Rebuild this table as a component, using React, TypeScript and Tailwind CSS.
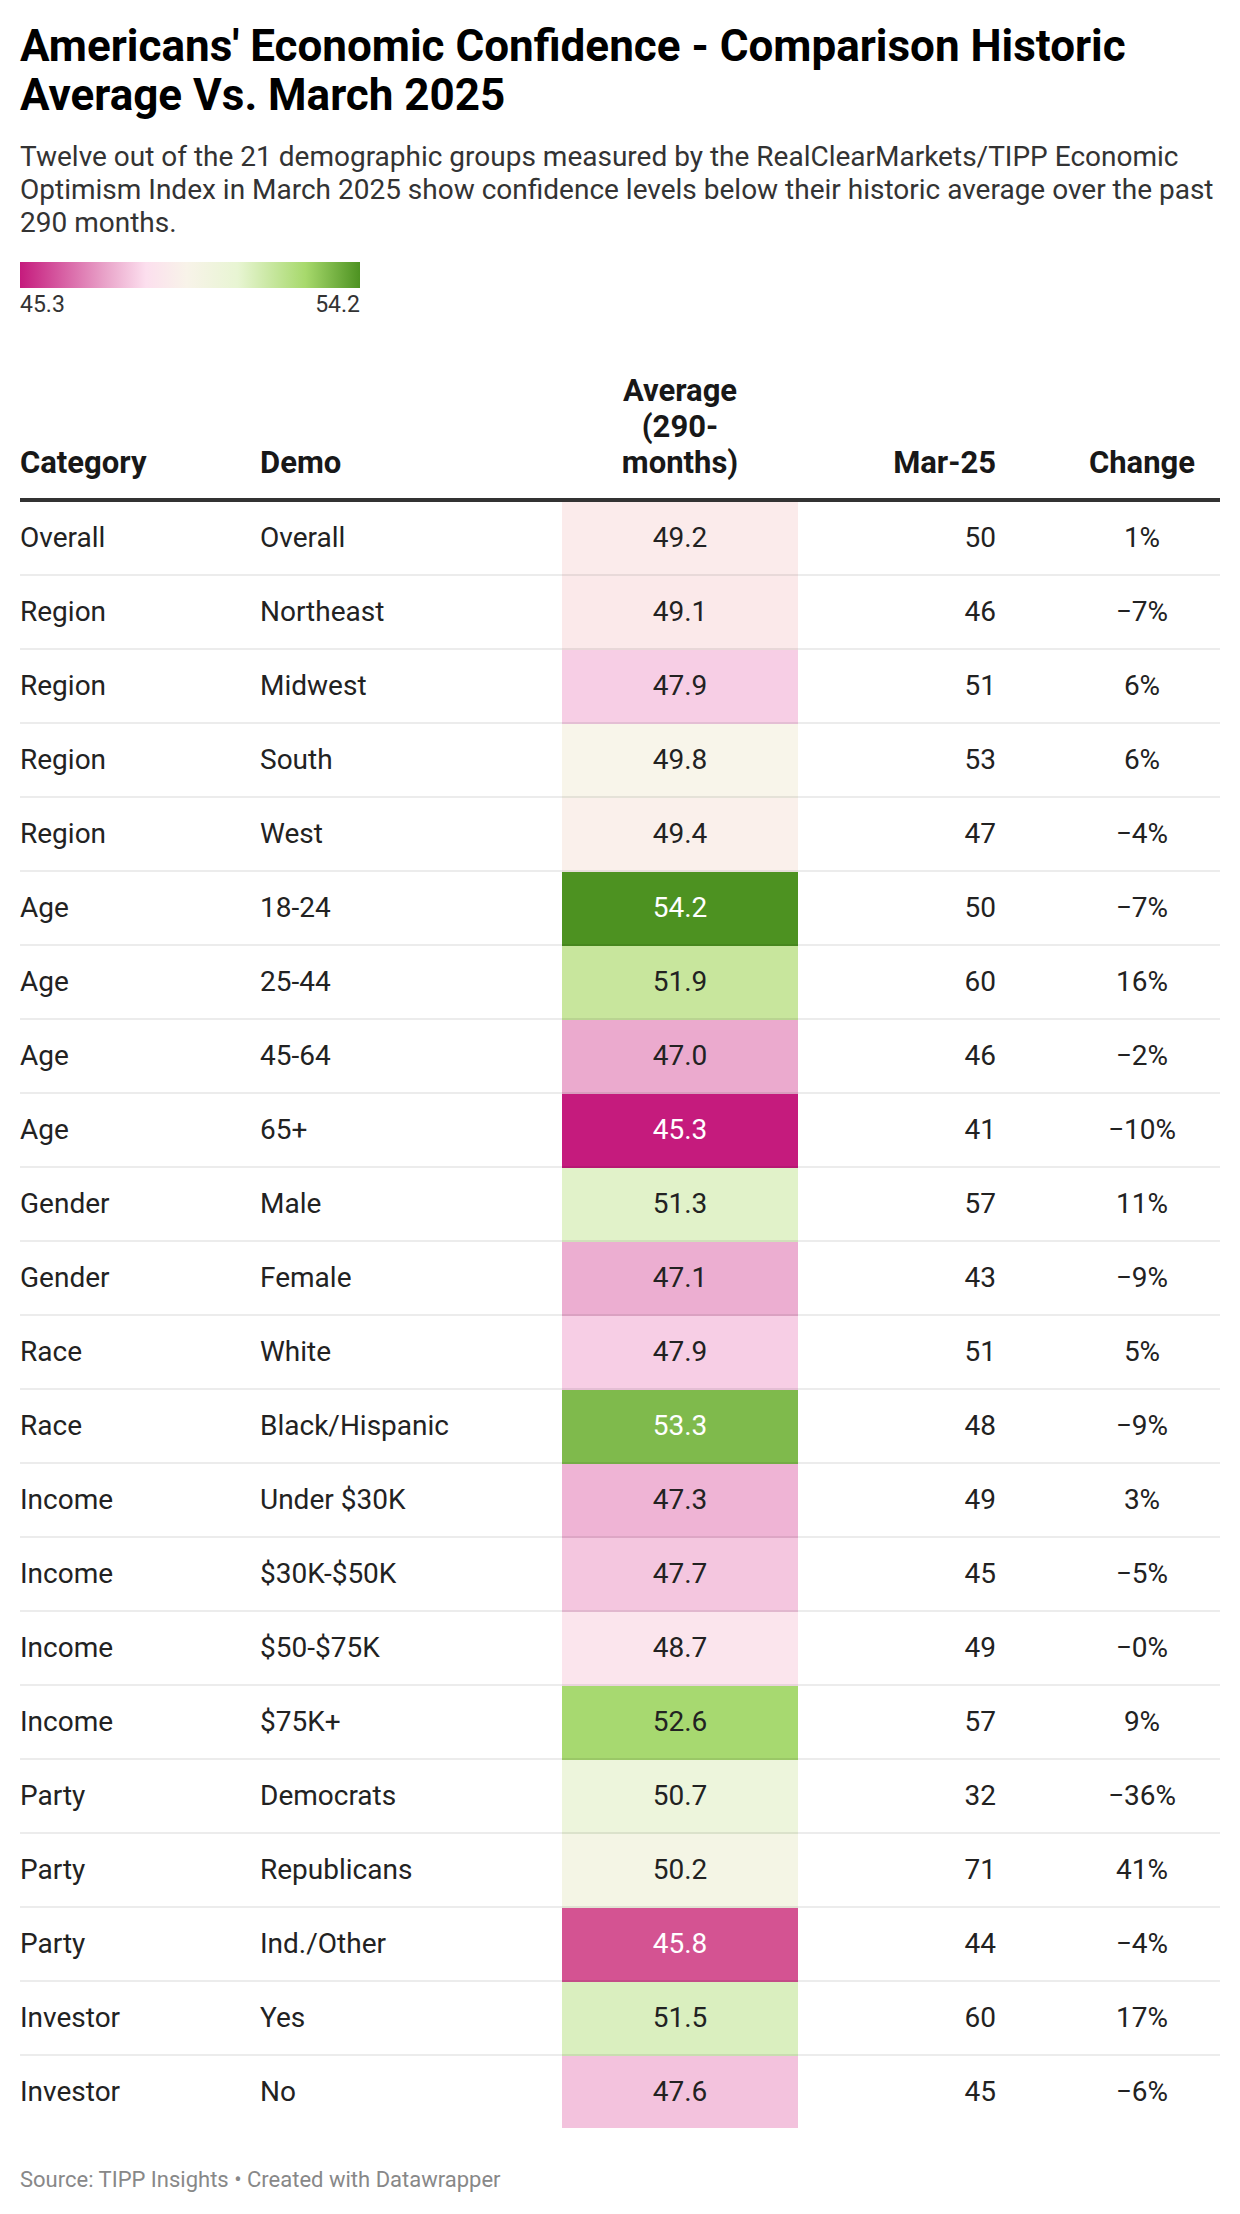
import React from 'react';

type Row = {
    category: string;
    demo: string;
    avg: string;
    bg: string;
    light?: boolean;
    mar: string;
    change: string;
};

// colours read off the PiYG-style scale (45.3 magenta -> 54.2 green)
const ROWS: Row[] = [
    { category: 'Overall', demo: 'Overall', avg: '49.2', bg: 'bg-[#fbebeb]', mar: '50', change: '1%' },
    { category: 'Region', demo: 'Northeast', avg: '49.1', bg: 'bg-[#fbe9ea]', mar: '46', change: '−7%' },
    { category: 'Region', demo: 'Midwest', avg: '47.9', bg: 'bg-[#f7cee5]', mar: '51', change: '6%' },
    { category: 'Region', demo: 'South', avg: '49.8', bg: 'bg-[#f8f5ea]', mar: '53', change: '6%' },
    { category: 'Region', demo: 'West', avg: '49.4', bg: 'bg-[#faf0eb]', mar: '47', change: '−4%' },
    { category: 'Age', demo: '18-24', avg: '54.2', bg: 'bg-[#4d9221]', light: true, mar: '50', change: '−7%' },
    { category: 'Age', demo: '25-44', avg: '51.9', bg: 'bg-[#c8e69d]', mar: '60', change: '16%' },
    { category: 'Age', demo: '45-64', avg: '47.0', bg: 'bg-[#ebaace]', mar: '46', change: '−2%' },
    { category: 'Age', demo: '65+', avg: '45.3', bg: 'bg-[#c51b7d]', light: true, mar: '41', change: '−10%' },
    { category: 'Gender', demo: 'Male', avg: '51.3', bg: 'bg-[#e1f2c9]', mar: '57', change: '11%' },
    { category: 'Gender', demo: 'Female', avg: '47.1', bg: 'bg-[#ecaed1]', mar: '43', change: '−9%' },
    { category: 'Race', demo: 'White', avg: '47.9', bg: 'bg-[#f7cee5]', mar: '51', change: '5%' },
    { category: 'Race', demo: 'Black/Hispanic', avg: '53.3', bg: 'bg-[#7fba4c]', light: true, mar: '48', change: '−9%' },
    { category: 'Income', demo: 'Under $30K', avg: '47.3', bg: 'bg-[#efb4d5]', mar: '49', change: '3%' },
    { category: 'Income', demo: '$30K-$50K', avg: '47.7', bg: 'bg-[#f4c6df]', mar: '45', change: '−5%' },
    { category: 'Income', demo: '$50-$75K', avg: '48.7', bg: 'bg-[#fbe5ed]', mar: '49', change: '−0%' },
    { category: 'Income', demo: '$75K+', avg: '52.6', bg: 'bg-[#a7d970]', mar: '57', change: '9%' },
    { category: 'Party', demo: 'Democrats', avg: '50.7', bg: 'bg-[#edf5dc]', mar: '32', change: '−36%' },
    { category: 'Party', demo: 'Republicans', avg: '50.2', bg: 'bg-[#f4f5e5]', mar: '71', change: '41%' },
    { category: 'Party', demo: 'Ind./Other', avg: '45.8', bg: 'bg-[#d45392]', light: true, mar: '44', change: '−4%' },
    { category: 'Investor', demo: 'Yes', avg: '51.5', bg: 'bg-[#daefbf]', mar: '60', change: '17%' },
    { category: 'Investor', demo: 'No', avg: '47.6', bg: 'bg-[#f3c2dd]', mar: '45', change: '−6%' },
];

const COLS = 'grid grid-cols-[240px_302px_236px_198px_224px]';

export default function App() {
    return (
        <div className="min-h-screen bg-white px-[20px] pt-[22px] font-['Roboto',sans-serif]">
            <h1 className="text-[44px] leading-[49px] font-bold text-black">
                Americans' Economic Confidence - Comparison Historic Average Vs. March 2025
            </h1>
            <p className="mt-[20px] text-[28px] leading-[33px] text-[#333]">
                Twelve out of the 21 demographic groups measured by the RealClearMarkets/TIPP Economic Optimism Index in March 2025 show confidence levels below their historic average over the past 290 months.
            </p>

            {/* legend */}
            <div className="mt-[23px] w-[340px]">
                <div className="h-[26px] bg-[linear-gradient(to_right,#c51b7d_0%,#e9a3c9_25%,#fcdfee_37%,#f8f3e9_49%,#e8f5d3_64%,#a7d96c_84%,#4d9221_100%)]" />
                <div className="mt-[5px] flex justify-between text-[23px] leading-[24px] text-[#333]">
                    <span>45.3</span>
                    <span>54.2</span>
                </div>
            </div>

            {/* table */}
            <div className="mt-[56px] text-[28px] text-[#222]">
                <div className={`${COLS} items-end border-b-4 border-[#333] pb-[17px] text-[31px] font-bold leading-[36px] text-[#181818]`}>
                    <div>Category</div>
                    <div>Demo</div>
                    <div className="text-center">
                        Average
                        <br />
                        (290-
                        <br />
                        months)
                    </div>
                    <div className="text-right">Mar-25</div>
                    <div className="pl-[68px] text-center">Change</div>
                </div>

                {ROWS.map((r, i) => {
                    const last = i === ROWS.length - 1;
                    const cell = `flex items-center ${last ? 'h-[72px]' : 'h-[74px] border-b-2 border-black/[0.075]'}`;
                    return (
                        <div key={i} className={COLS}>
                            <div className={cell}>{r.category}</div>
                            <div className={cell}>{r.demo}</div>
                            <div className={`${cell} justify-center ${r.bg} ${r.light ? 'text-white' : ''}`}>{r.avg}</div>
                            <div className={`${cell} justify-end`}>{r.mar}</div>
                            <div className={`${cell} justify-center pl-[68px]`}>{r.change}</div>
                        </div>
                    );
                })}
            </div>

            <div className="mt-[40px] pb-[20px] text-[22px] leading-[24px] text-[#888]">
                Source: TIPP Insights • Created with Datawrapper
            </div>
        </div>
    );
}
